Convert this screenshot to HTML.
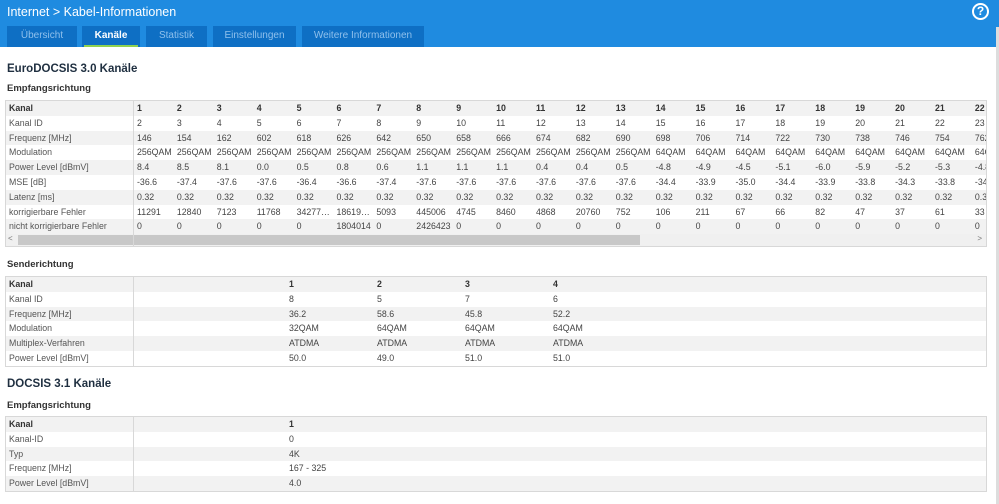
<!DOCTYPE html>
<html><head><meta charset="utf-8"><style>
*{margin:0;padding:0;box-sizing:border-box}
body{width:999px;height:504px;overflow:hidden;background:#fff;font-family:"Liberation Sans",sans-serif;position:relative;color:#444}
.hdr{position:absolute;left:0;top:0;width:999px;height:47px;background:#1f8be0}
.ttl{position:absolute;left:7px;top:5px;color:#fff;font-size:12.5px}
.tab{position:absolute;top:26px;height:21px;background:#0e6fc4;color:#8fc0ec;font-size:10px;text-align:center;line-height:20px}
.tab.act{color:#fff;font-weight:bold}
.tab.act:after{content:"";position:absolute;left:2px;right:2px;bottom:0;height:2px;background:#8fd14f}
.help{position:absolute;left:972px;top:3px;width:17px;height:17px;border:2px solid #fff;border-radius:50%;color:#fff;font-size:12px;font-weight:bold;text-align:center;line-height:13px}
.h1{position:absolute;left:7px;font-size:11.5px;font-weight:bold;color:#1f2f40}
.h2{position:absolute;left:7px;font-size:9.5px;font-weight:bold;color:#333}
.tbl{position:absolute;left:5px;width:982px;border:1px solid #d8d8d8;font-size:8.8px}
.r{height:14.8px;line-height:15.5px;white-space:nowrap;position:relative;overflow:hidden}
.r:nth-child(odd){background:#f2f2f2}
.r span{position:absolute;top:0}
.r .l{left:3px;color:#555}
.r.b{font-weight:bold;color:#333}
.r.b .l{color:#333}
.div{position:absolute;left:127px;top:0;bottom:0;width:1px;background:#d8d8d8}
.sb{position:relative;height:12px;background:#f0f0f0;font-size:8px;color:#777}
</style></head><body>
<div class="hdr"></div>
<div class="ttl">Internet &gt; Kabel-Informationen</div>
<div class="tab" style="left:7px;width:70px">Übersicht</div>
<div class="tab act" style="left:82px;width:58px">Kanäle</div>
<div class="tab" style="left:146px;width:61px">Statistik</div>
<div class="tab" style="left:213px;width:83px">Einstellungen</div>
<div class="tab" style="left:302px;width:122px">Weitere Informationen</div>
<div class="help">?</div>
<div style="position:absolute;left:996px;top:27px;width:3px;height:477px;background:#ddd"></div>

<div class="h1" style="top:63px">EuroDOCSIS 3.0 Kanäle</div>
<div class="h2" style="top:83px">Empfangsrichtung</div>
<div class="tbl" style="top:100px" id="t1"></div>

<div class="h2" style="top:259px">Senderichtung</div>
<div class="tbl" style="top:276px" id="t2"></div>

<div class="h1" style="top:378px">DOCSIS 3.1 Kanäle</div>
<div class="h2" style="top:400px">Empfangsrichtung</div>
<div class="tbl" style="top:416px" id="t3"></div>

<script>
function build(id,rows,xs,scroll){
 var h='';
 rows.forEach(function(r,i){
  h+='<div class="r'+(i==0?' b':'')+'"><span class="l">'+r[0]+'</span>';
  for(var j=1;j<r.length;j++){h+='<span style="left:'+xs[j-1]+'px">'+r[j]+'</span>';}
  h+='</div>';
 });
 if(scroll)h+='<div class="sb"><span style="position:absolute;left:2px;top:0">&lt;</span><div style="position:absolute;left:12px;top:1px;width:622px;height:10px;background:#c8c8c8"></div><span style="position:absolute;right:4px;top:0">&gt;</span></div>';
 h+='<div class="div"></div>';
 document.getElementById(id).innerHTML=h;
}
var xs=[];for(var k=0;k<22;k++)xs.push(131+k*39.9);
var ch=[],id=[],fr=[146,154,162,602,618,626,642,650,658,666,674,682,690,698,706,714,722,730,738,746,754,762];
for(k=1;k<=22;k++){ch.push(k);id.push(k+1);}
var mod=[];for(k=0;k<22;k++)mod.push(k<13?'256QAM':'64QAM');
var pl=['8.4','8.5','8.1','0.0','0.5','0.8','0.6','1.1','1.1','1.1','0.4','0.4','0.5','-4.8','-4.9','-4.5','-5.1','-6.0','-5.9','-5.2','-5.3','-4.8'];
var mse=['-36.6','-37.4','-37.6','-37.6','-36.4','-36.6','-37.4','-37.6','-37.6','-37.6','-37.6','-37.6','-37.6','-34.4','-33.9','-35.0','-34.4','-33.9','-33.8','-34.3','-33.8','-34'];
var lat=[];for(k=0;k<22;k++)lat.push('0.32');
var kf=['11291','12840','7123','11768','34277…','18619…','5093','445006','4745','8460','4868','20760','752','106','211','67','66','82','47','37','61','33'];
var nk=['0','0','0','0','0','1804014','0','2426423','0','0','0','0','0','0','0','0','0','0','0','0','0','0'];
build('t1',[['Kanal'].concat(ch),['Kanal ID'].concat(id),['Frequenz [MHz]'].concat(fr),['Modulation'].concat(mod),['Power Level [dBmV]'].concat(pl),['MSE [dB]'].concat(mse),['Latenz [ms]'].concat(lat),['korrigierbare Fehler'].concat(kf),['nicht korrigierbare Fehler'].concat(nk)],xs,true);
var xs2=[283,371,459,547];
build('t2',[['Kanal',1,2,3,4],['Kanal ID',8,5,7,6],['Frequenz [MHz]','36.2','58.6','45.8','52.2'],['Modulation','32QAM','64QAM','64QAM','64QAM'],['Multiplex-Verfahren','ATDMA','ATDMA','ATDMA','ATDMA'],['Power Level [dBmV]','50.0','49.0','51.0','51.0']],xs2,false);
build('t3',[['Kanal',1],['Kanal-ID',0],['Typ','4K'],['Frequenz [MHz]','167 - 325'],['Power Level [dBmV]','4.0']],xs2,false);
</script>
</body></html>
